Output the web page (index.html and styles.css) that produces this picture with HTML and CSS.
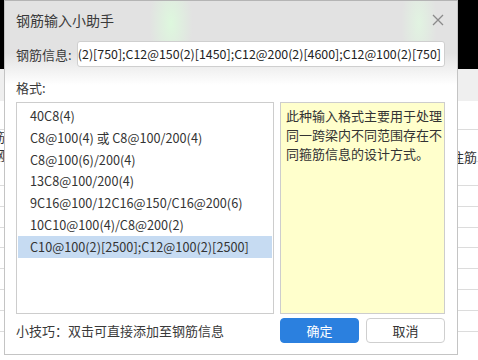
FILE: index.html
```html
<!DOCTYPE html>
<html lang="zh-CN">
<head>
    <meta charset="UTF-8">
    <title>钢筋输入小助手</title>
    <link rel="stylesheet" href="styles.css">
</head>
<body>

    <div class="page">
        <!-- page behind the dialog -->
        <div class="topbar"></div>
        <div class="toolbar"></div>
        <div class="grid">
            <div class="grid-row row-head"></div>
            <div class="grid-row row-sub">
                <span class="cell-left">筋</span>
                <span class="cell-left second">钢</span>
                <span class="cell-right">注筋</span>
            </div>
            <div class="grid-row row-tall"></div>
            <div class="grid-row"></div>
            <div class="grid-row"></div>
            <div class="grid-row"></div>
            <div class="grid-row"></div>
            <div class="grid-row"></div>
            <div class="grid-row"></div>
            <div class="grid-row"></div>
        </div>

        <!-- dialog -->
        <div class="dialog">
            <div class="dialog-header">
                <span class="dialog-title">钢筋输入小助手</span>
                <svg class="close-icon" width="12" height="12" viewBox="0 0 12 12">
                    <path d="M1 1 L11 11 M11 1 L1 11" stroke="#8a8a8a" stroke-width="1.3" fill="none"/>
                </svg>
            </div>

            <div class="info-row">
                <span class="label">钢筋信息:</span>
                <div class="info-input"><span>C10@100(2)[750];C12@150(2)[1450];C12@200(2)[4600];C12@100(2)[750]</span></div>
            </div>

            <div class="format-label">格式:</div>

            <div class="format-body">
                <ul class="format-list">
                    <li>40C8(4)</li>
                    <li>C8@100(4) 或 C8@100/200(4)</li>
                    <li>C8@100(6)/200(4)</li>
                    <li>13C8@100/200(4)</li>
                    <li>9C16@100/12C16@150/C16@200(6)</li>
                    <li>10C10@100(4)/C8@200(2)</li>
                    <li class="selected">C10@100(2)[2500];C12@100(2)[2500]</li>
                </ul>
                <div class="format-note">此种输入格式主要用于处理同一跨梁内不同范围存在不同箍筋信息的设计方式。</div>
            </div>

            <div class="dialog-footer">
                <span class="tip">小技巧：双击可直接添加至钢筋信息</span>
                <div class="buttons">
                    <button class="btn btn-primary">确定</button>
                    <button class="btn">取消</button>
                </div>
            </div>
        </div>
    </div>

</body>
</html>
```

FILE: styles.css
```css
* {
    margin: 0;
    padding: 0;
    box-sizing: border-box;
}

body {
    font-family: "Noto Sans CJK SC", "Noto Sans", sans-serif;
    color: #333;
    background: #fff;
}

.page {
    position: relative;
    width: 478px;
    height: 360px;
    overflow: hidden;
}

/* background page */
.topbar {
    height: 69px;
    background: #000;
}

.toolbar {
    height: 32px;
    background: #efefef;
}

.grid-row {
    position: relative;
    height: 20.8px;
    border-bottom: 1px solid #dcdcdc;
    font-size: 13px;
}

.row-head {
    height: 29px;
}

.row-sub {
    height: 32px;
}

.row-tall {
    height: 24px;
}

.cell-left {
    position: absolute;
    left: -8px;
    top: -1px;
    line-height: 16px;
}

.cell-left.second {
    top: 17px;
}

.cell-right {
    position: absolute;
    right: 1px;
    top: 19px;
    line-height: 16px;
}

/* dialog */
.dialog {
    position: absolute;
    left: 4px;
    top: 0;
    width: 454px;
    height: 355px;
    border: 1px solid #c4c4c4;
    border-top-color: #b4b4b4;
    background:
        radial-gradient(ellipse 22px 50px at 166px 22px, rgba(220, 255, 220, 0.75), rgba(220, 255, 220, 0) 100%),
        radial-gradient(ellipse 18px 50px at 414px 22px, rgba(225, 255, 225, 0.6), rgba(225, 255, 225, 0) 100%),
        linear-gradient(#e2e2e2 0, #e2e2e2 52px, #fff 84px, #fff 100%);
    padding: 0 12px 0 11px;
    display: flex;
    flex-direction: column;
}

.dialog-header {
    height: 38px;
    display: flex;
    align-items: center;
    justify-content: space-between;
    padding-right: 1px;
}

.dialog-title {
    font-size: 14px;
    color: #3a3a3a;
}

.info-row {
    display: flex;
    align-items: center;
    gap: 5px;
    height: 26px;
    margin-top: 2px;
}

.label {
    font-size: 13px;
    color: #3a3a3a;
    white-space: nowrap;
}

.info-input {
    flex: 1;
    height: 26px;
    background: #fff;
    border: 1px solid #cfcfcf;
    border-radius: 3px;
    display: flex;
    justify-content: flex-end;
    align-items: center;
    overflow: hidden;
    padding-right: 3px;
    font-size: 12.4px;
    white-space: nowrap;
    color: #222;
}

.format-label {
    font-size: 13px;
    color: #3a3a3a;
    height: 24px;
    line-height: 24px;
    margin-top: 9px;
}

.format-body {
    display: flex;
    gap: 6px;
    height: 212px;
    margin-top: 2px;
}

.format-list {
    list-style: none;
    width: 258px;
    border: 1px solid #cdcdcd;
    background: #fff;
    padding: 2px 1px;
}

.format-list li {
    height: 21.8px;
    line-height: 21.8px;
    padding-left: 12px;
    font-size: 12.7px;
    color: #333;
    white-space: nowrap;
}

.format-list li.selected {
    background: #c6dbf2;
}

.format-note {
    flex: 1;
    background: #ffffcc;
    border: 1px solid #cdcdcd;
    padding: 3px 0 0 5px;
    font-size: 13px;
    line-height: 19px;
    color: #333;
}

.dialog-footer {
    display: flex;
    align-items: center;
    justify-content: space-between;
    height: 25px;
    margin-top: 4px;
}

.tip {
    font-size: 13px;
    color: #3a3a3a;
}

.buttons {
    display: flex;
    gap: 7px;
}

.btn {
    width: 79px;
    height: 25px;
    border: 1px solid #cfcfcf;
    border-radius: 4px;
    background: #fff;
    font-family: inherit;
    font-size: 13px;
    color: #333;
}

.btn-primary {
    background: #2b80df;
    border-color: #2b80df;
    color: #fff;
}
```
